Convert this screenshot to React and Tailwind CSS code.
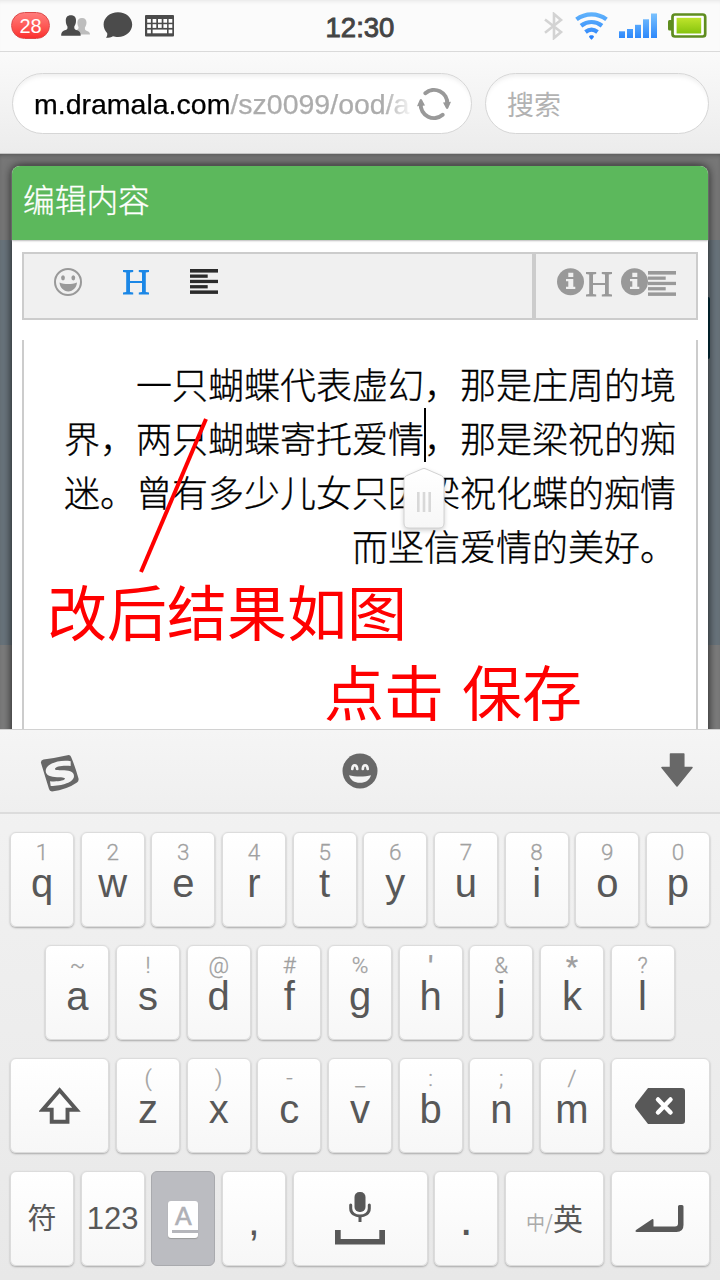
import React from "react";

const CJK = "font-['Noto_Sans_CJK_SC',sans-serif]";

function Badge() {
  return (
    <div className="flex h-[27px] w-[39px] items-center justify-center rounded-full border border-[#dc4a4a] bg-linear-to-b from-[#ff7b7b] to-[#fb2c2c] text-[20px] leading-none text-white">
      28
    </div>
  );
}

function UsersIcon() {
  return (
    <svg className="ml-[11px]" width="30" height="22" viewBox="0 0 30 22">
      <path fill="#bdbdbd" d="M21 3c3 0 4.500 2 4.500 4.500 0 2.500-1 4-1.600 5 0 2 0 2.600 2 3.500 2 .8 3.100 1.500 3.100 3.500H19c0-2-2-3.300-4-4.200 1.700-.7 2.600-1.300 2.600-3C17 11 16.400 9.500 16.400 7.500 16.400 5 18 3 21 3z" />
      <path fill="#4b4b4b" d="M9.800.3c3.600 0 5.400 2.200 5.200 5.400 0 2.700-.8 4.300-1.700 5.700-.2 2.400.3 3 2.700 3.900 2.400.9 3.700 1.900 3.700 5.500H.2c0-3.600 1.300-4.600 3.700-5.500 2.400-.9 2.900-1.500 2.500-3.900C5.500 10 4.800 8.400 4.800 5.700 4.700 2.500 6.400.3 9.800.3z" />
    </svg>
  );
}

function BubbleIcon() {
  return (
    <svg className="ml-[12px]" width="30" height="27" viewBox="0 0 30 27">
      <path fill="#4b4b4b" d="M15 0.300c8 0 14.200 5.400 14.200 12.300S23 25 15 25c-2 0-3.500-.3-5-.8-1.800 1.200-4 1.500-7 1.500 1-1.300 1.500-2.500 1.200-4.500C2 19 .6 16 .6 12.600.6 5.700 7 .3 15 .3z" />
    </svg>
  );
}

function KeyboardIcon() {
  const cells = [2.2, 7.600, 13, 18.400, 23.600];
  return (
    <svg className="ml-[12px]" width="29" height="22" viewBox="0 0 29 22">
      <rect x="0" y="0" width="29" height="21.500" rx="1" fill="#4b4b4b" />
      {cells.map((x) => (
        <g key={x} fill="#fff">
          <rect x={x} y="4" width="3.700" height="3.700" />
          <rect x={x} y="9.200" width="3.700" height="3.700" />
        </g>
      ))}
      <g fill="#fff">
        <rect x="2.200" y="14.600" width="3.700" height="3.700" />
        <rect x="7.600" y="14.600" width="14.400" height="3.700" />
        <rect x="23.600" y="14.600" width="3.700" height="3.700" />
      </g>
    </svg>
  );
}

function BluetoothIcon() {
  return (
    <svg width="20" height="28" viewBox="0 0 20 28" fill="none" stroke="#d3d3d3" strokeWidth="2.600">
      <path d="M1 7.500 17 20l-7 6V2l7 6L1 20.800" />
    </svg>
  );
}

function WifiIcon() {
  return (
    <svg className="ml-[11px]" width="33" height="28" viewBox="0 0 33 28">
      <defs>
        <linearGradient id="wf" x1="0" y1="0" x2="0" y2="28" gradientUnits="userSpaceOnUse">
          <stop offset="0" stopColor="#62b4fb" />
          <stop offset="1" stopColor="#2a82fb" />
        </linearGradient>
      </defs>
      <g fill="none" stroke="url(#wf)" strokeWidth="4.300">
        <path d="M1.500 7.400C10.500.600 22.500.600 31.500 7.400" />
        <path d="M6 13.700c6.500-4.900 14.500-4.900 21 0" />
        <path d="M10.500 19.900c3.900-2.900 8.100-2.900 12 0" />
      </g>
      <path fill="#2a82fb" d="M14 24.400c.6-1.500 4.400-1.500 5 0 0 1-1.400 2-2.500 3.400-1.100-1.400-2.500-2.400-2.500-3.400z" />
    </svg>
  );
}

function SignalIcon() {
  return (
    <svg className="ml-[11px]" width="39" height="26" viewBox="0 0 39 26">
      <defs>
        <linearGradient id="sg" x1="0" y1="0" x2="0" y2="26" gradientUnits="userSpaceOnUse">
          <stop offset="0" stopColor="#7cc3fd" />
          <stop offset="1" stopColor="#2a86fb" />
        </linearGradient>
      </defs>
      <g fill="url(#sg)">
        <rect x="0" y="18.300" width="6" height="6.700" />
        <rect x="8" y="16" width="6" height="9" />
        <rect x="16" y="11.800" width="6" height="13.200" />
        <rect x="24" y="6.300" width="6" height="18.700" />
        <rect x="32" y="0.500" width="6" height="24.500" />
      </g>
    </svg>
  );
}

function BatteryIcon() {
  return (
    <svg className="ml-[10px]" width="39" height="25" viewBox="0 0 39 25">
      <defs>
        <linearGradient id="bt" x1="0" y1="0" x2="0" y2="1">
          <stop offset="0" stopColor="#bfe42c" />
          <stop offset="1" stopColor="#86c40d" />
        </linearGradient>
      </defs>
      <rect x="0" y="7" width="5" height="10.500" rx="1.500" fill="#5f8d1f" />
      <rect x="4.500" y="1.500" width="32.700" height="22" rx="2.500" fill="#fff" stroke="#5f8d1f" strokeWidth="2.700" />
      <rect x="8.600" y="4.800" width="24.600" height="15.700" fill="url(#bt)" />
    </svg>
  );
}

function StatusBar() {
  return (
    <div className="grid h-[52px] grid-cols-3 items-center border-b border-[#dadada] bg-[#fbfbfb] shadow-[inset_0_4px_4px_-3px_#e4e4e4]">
      <div className="flex items-center pl-[11px]">
        <Badge />
        <UsersIcon />
        <BubbleIcon />
        <KeyboardIcon />
      </div>
      <div className="pt-[4px] text-center text-[27.500px] leading-none text-[#444] [-webkit-text-stroke:0.9px_#444]">12:30</div>
      <div className="flex items-center justify-end pr-[13px]">
        <BluetoothIcon />
        <WifiIcon />
        <SignalIcon />
        <BatteryIcon />
      </div>
    </div>
  );
}

function ReloadIcon() {
  return (
    <svg className="shrink-0" width="36" height="34" viewBox="0 0 36 34">
      <g fill="none" stroke="#999" strokeWidth="4" strokeLinecap="round">
        <path d="M9.300 6.200A13.300 13.300 0 0 1 31.300 17" />
        <path d="M26.700 27.800A13.300 13.300 0 0 1 4.700 17" />
      </g>
      <path fill="#999" d="M27 15.500l8-.800-2.800 6.500c-.5 1-1.700 1-2.200 0zM9 18.500l-8 .800 2.800-6.500c.5-1 1.700-1 2.200 0z" />
    </svg>
  );
}

function AddressBar() {
  return (
    <div className="flex h-[102px] items-start gap-[13px] border-b border-[#c4c4c4] bg-linear-to-b from-[#fafafa] to-[#ececec] pl-[12px] pt-[21px]">
      <div className="flex h-[61px] w-[460px] items-center rounded-full border-[1.500px] border-[#d6d6d6] bg-white pl-[21px] shadow-[inset_0_5px_5px_-3px_#ececec]">
        <div className="w-[377px] overflow-hidden whitespace-nowrap pt-px text-[28.500px] leading-[40px] text-[#acacac] [-webkit-text-stroke:0.25px_currentColor] [mask-image:linear-gradient(90deg,#000_350px,transparent_380px)]">
          <span className="text-black">m.dramala.com</span>/sz0099/ood/a
        </div>
        <div className="ml-[5px]">
          <ReloadIcon />
        </div>
      </div>
      <div className="flex h-[61px] w-[224px] items-center rounded-full border-[1.500px] border-[#d6d6d6] bg-white pl-[21px] shadow-[inset_0_5px_5px_-3px_#ececec]">
        <span className={`${CJK} text-[27px] leading-none text-[#b2b2b2]`}>搜索</span>
      </div>
    </div>
  );
}

function SmileIcon() {
  return (
    <svg width="28" height="28" viewBox="0 0 28 28">
      <circle cx="14" cy="14" r="13" fill="none" stroke="#999" strokeWidth="2" />
      <ellipse cx="9" cy="9.800" rx="1.900" ry="2.600" fill="#999" />
      <ellipse cx="19.300" cy="9.800" rx="1.900" ry="2.600" fill="#999" />
      <path fill="#999" d="M5.500 14.600c5 2 12 2 17.500 0-.3 5-4 8.800-8.700 8.800s-8.500-3.800-8.800-8.800z" />
    </svg>
  );
}

function HeadingIcon() {
  return (
    <svg width="26" height="25" viewBox="0 0 26 25" fill="currentColor">
      <path d="M0 0H10.200V2L7 2.500V11H19V2.500L15.800 2V0H26V2L22.800 2.500V22L26 22.500V24.500H15.800V22.500L19 22V13H7V22L10.200 22.500V24.500H0V22.500L3.200 22V2.500L0 2Z" />
    </svg>
  );
}

function AlignLeftIcon() {
  return (
    <svg width="28" height="25" viewBox="0 0 28 25" fill="currentColor">
      <rect width="28" height="3.600" />
      <rect y="5.500" width="17.700" height="3.300" />
      <rect y="10.800" width="28" height="3.300" />
      <rect y="16.100" width="17.700" height="3.300" />
      <rect y="21.400" width="28" height="3.500" />
    </svg>
  );
}

function InfoIcon() {
  return (
    <svg width="27" height="28" viewBox="0 0 27 28">
      <circle cx="13.500" cy="13.800" r="13.500" fill="#999" />
      <path fill="#f0f0f0" d="M11.300 4.700h5v4.300h-5zM9 11h7.300v7.800h2V21H9v-2.200h2.300v-5.500H9z" />
    </svg>
  );
}

function EditorToolbar() {
  return (
    <div className="mx-[10px] mt-[12px] flex h-[68px] border-2 border-[#ccc] bg-[#f0f0f0]">
      <div className="flex w-[508px] items-start pl-[30px] pt-[14px]">
        <SmileIcon />
        <div className="ml-[41px] mt-[2px] text-[#1b87e6]">
          <HeadingIcon />
        </div>
        <div className="ml-[41px] mt-px text-[#2b2b2b]">
          <AlignLeftIcon />
        </div>
      </div>
      <div className="flex flex-1 items-start border-l-4 border-[#ccc] pl-[20.500px] pt-[14px] text-[#999]">
        <InfoIcon />
        <div className="ml-[2px] mt-[4px]">
          <HeadingIcon />
        </div>
        <div className="ml-[9px]">
          <InfoIcon />
        </div>
        <div className="mt-[3px]">
          <AlignLeftIcon />
        </div>
      </div>
    </div>
  );
}

function CursorHandle() {
  return (
    <svg className="absolute left-[400px] top-[310px] overflow-visible" width="48" height="68" viewBox="400 464 48 68">
      <defs>
        <linearGradient id="ch" x1="0" y1="0" x2="0" y2="1">
          <stop offset="0" stopColor="#fff" />
          <stop offset="1" stopColor="#f7f7f7" />
        </linearGradient>
      </defs>
      <path
        className="drop-shadow-[0_2px_2px_rgba(0,0,0,0.180)]"
        fill="url(#ch)"
        stroke="#d2d2d2"
        d="M424 468.500q1 0 2 .500l15.500 6.700q2.500 1.300 2.500 4V523q0 5-5 5h-30q-5 0-5-5v-43.300q0-2.700 2.500-4L422 469q1-.500 2-.500z"
      />
      <path stroke="#d8d8d8" strokeWidth="2.600" d="M418.300 492v20M424 492v20M429.700 492v20" />
    </svg>
  );
}

function Page() {
  return (
    <div className="relative h-[575px] overflow-hidden bg-[linear-gradient(#777_0_86px,#69747c_86px_491px,#7c7c7c_491px)] px-[12px] pt-[12px] shadow-[inset_0_3px_4px_-2px_#555]">
      <div className="absolute left-[706px] top-[143px] h-[62px] w-[4px] rounded bg-[#03303f]" />
      <div className="relative h-[600px] rounded-t-[8px] bg-white shadow-[0_0_10px_0_rgba(0,0,0,0.800)]">
        <div className="h-[74px] rounded-t-[8px] bg-[#5cb85c] pl-[11px] pt-[9px] shadow-[0_1px_2px_#bbb]">
          <span className={`${CJK} block text-[31.700px] font-light leading-[46px] text-white [-webkit-text-stroke:0.3px_currentColor]`}>编辑内容</span>
        </div>
        <EditorToolbar />
        <div className={`mx-[10px] mt-[20px] h-[420px] border-x-2 border-[#ccc] pr-[20px] pt-[16px] text-right ${CJK} text-[36px] font-light leading-[54px] text-black [-webkit-text-stroke:0.3px_currentColor]`}>
          <p>一只蝴蝶代表虚幻，那是庄周的境</p>
          <p>界，两只蝴蝶寄托爱情，那是梁祝的痴</p>
          <p>迷。曾有多少儿女只因梁祝化蝶的痴情</p>
          <p>而坚信爱情的美好。</p>
        </div>
      </div>
      <div className="absolute left-[424px] top-[254px] h-[54px] w-[2px] bg-black" />
      <CursorHandle />
      <svg className="absolute left-[130px] top-[260px]" width="90" height="165" viewBox="130 414 90 165">
        <path d="M206 419 141 572" stroke="#f00" strokeWidth="4" />
      </svg>
      <div className={`absolute left-[47px] top-[423px] ${CJK} text-[60px] leading-[66px] text-[#f00]`}>改后结果如图</div>
      <div className={`absolute left-[324px] top-[503px] ${CJK} text-[60px] leading-[66px] text-[#f00] [word-spacing:4.500px]`}>点击 保存</div>
    </div>
  );
}

const KEY_BASE =
  "flex h-[95px] flex-col items-center rounded-[6px] border border-[#dcdcdc] bg-linear-to-b from-white to-[#f7f7f7] shadow-[0_1px_2px_#a8a8a8]";

function LetterKey({ hint, letter, bold }) {
  return (
    <div className={`${KEY_BASE} w-[64px] shrink-0 pt-[7px]`}>
      <span className={`${bold ? "text-[27px] font-bold leading-[28px]" : "text-[22.500px] font-light leading-[24px] [-webkit-text-stroke:0.3px_currentColor]"} h-[23px] font-['Roboto',sans-serif] text-[#a0a0a0]`}>{hint}</span>
      <span className="text-[40px] leading-[40px] text-[#585858]">{letter}</span>
    </div>
  );
}

function WideKey({ className, children }) {
  return <div className={`${KEY_BASE} justify-center ${className}`}>{children}</div>;
}

function SogouIcon() {
  return (
    <svg width="40" height="40" viewBox="0 0 40 40">
      <path fill="#686868" d="M3.500 8.500Q15 7 27.500 4.200q2.700-.700 3.500 1.500Q35 15 38.500 27.500q.500 2.500-1.500 4-10 7-25 9Q9.500 40 9 38L1 12q-.500-3 2.500-3.500z" transform="translate(0 -1)" />
      <path fill="#f4f4f4" d="M30.700 9.200C20 7.200 5.700 11.500 5.700 19c0 4.500 5.300 6 11.300 6.200 4 .100 8 .300 8 1.300 0 2-8 3.500-15 2.700l.700 4.800C22 33.800 34 30.500 34 24c0-5-6-5.700-12-5.800-4-.100-7 .100-7-1.200 0-2.500 8-3.800 15.700-3z" />
    </svg>
  );
}

function GrinIcon() {
  return (
    <svg width="36" height="36" viewBox="0 0 36 36">
      <circle cx="18" cy="18" r="17.500" fill="#686868" />
      <g fill="none" stroke="#f4f4f4" strokeWidth="2.700" strokeLinecap="round">
        <path d="M10.300 16c.3-5 4.500-5 4.900 0M20.800 16c.3-5 4.500-5 4.900 0" />
      </g>
      <path fill="#f4f4f4" d="M7 22.300c6 1.600 16 1.600 22 0-1.500 5-5.500 7.500-11 7.500S8.500 27.300 7 22.300z" />
    </svg>
  );
}

function KeyboardHeader() {
  return (
    <div className="flex h-[84px] items-start justify-between border-b-2 border-[#dcdcdc] bg-linear-to-b from-[#f5f5f5] to-[#efefef] pl-[40px] pr-[27px] pt-[22px]">
      <div className="w-[40px]">
        <SogouIcon />
      </div>
      <div className="ml-[-21px] mt-px">
        <GrinIcon />
      </div>
      <svg className="mt-px" width="32" height="34" viewBox="0 0 32 34">
        <path fill="#686868" stroke="#686868" strokeWidth="1.500" strokeLinejoin="round" d="M9.500 1h13.300v13.500H31L16 33 1 14.500h8.500z" />
      </svg>
    </div>
  );
}

const ROW1 = [["1", "q"], ["2", "w"], ["3", "e"], ["4", "r"], ["5", "t"], ["6", "y"], ["7", "u"], ["8", "i"], ["9", "o"], ["0", "p"]];
const ROW2 = [["~", "a"], ["!", "s"], ["@", "d"], ["#", "f"], ["%", "g"], ["'", "h"], ["&", "j"], ["*", "k"], ["?", "l"]];
const ROW3 = [["(", "z"], [")", "x"], ["-", "c"], ["_", "v"], [":", "b"], [";", "n"], ["/", "m"]];

function Keys({ items }) {
  return items.map(([hint, letter]) => <LetterKey key={letter} hint={hint} letter={letter} bold={hint === "'" || hint === "*"} />);
}

function Keyboard() {
  return (
    <div className="h-[551px] border-t border-[#d2d2d2] bg-linear-to-b from-[#f3f3f3] to-[#e8e8e8]">
      <KeyboardHeader />
      <div className="flex flex-col gap-[18px] px-[10px] pt-[18px]">
        <div className="flex justify-between">
          <Keys items={ROW1} />
        </div>
        <div className="flex justify-center gap-[6.650px]">
          <Keys items={ROW2} />
        </div>
        <div className="flex gap-[6.650px]">
          <WideKey className="flex-1">
            <svg width="42" height="38" viewBox="0 0 42 38">
              <path fill="none" stroke="#585858" strokeWidth="3.900" strokeLinejoin="miter" d="M20.600 3.200 3.800 22.700h8.900v12h15.800v-12h9z" />
            </svg>
          </WideKey>
          <Keys items={ROW3} />
          <WideKey className="flex-1">
            <svg width="50" height="36" viewBox="0 0 50 36">
              <path fill="#585858" d="M13 0h34q3 0 3 3v30q0 3-3 3H13L.600 20q-1.200-2 0-4z" />
              <path stroke="#fff" strokeWidth="4.500" strokeLinecap="round" d="M23 11.500 35.500 24.500M35.500 11.500 23 24.500" />
            </svg>
          </WideKey>
        </div>
        <div className="flex gap-[6.650px]">
          <WideKey className="w-[64px] shrink-0">
            <span className={`${CJK} -mt-[4px] text-[29px] leading-none text-[#585858]`}>符</span>
          </WideKey>
          <WideKey className="w-[64px] shrink-0">
            <span className="-mt-px text-[31px] leading-none text-[#585858]">123</span>
          </WideKey>
          <div className="flex h-[95px] w-[64px] shrink-0 items-center justify-center rounded-[6px] border border-[#a9aaae] bg-[#bbbcc1]">
            <div className="mt-[2px] flex h-[37px] w-[30px] flex-col items-center rounded-[3px] bg-white shadow-[0_1px_1px_#999]">
              <span className="mt-[2px] h-[27px] text-[25px] leading-[27px] text-[#afb0b6] [-webkit-text-stroke:0.6px_currentColor]">A</span>
              <span className="h-[3px] w-[26px] self-end bg-[#b5b6bb]" />
            </div>
          </div>
          <WideKey className="w-[64px] shrink-0">
            <span className="pt-[4px] text-[42px] leading-[40px] text-[#585858]">,</span>
          </WideKey>
          <WideKey className="w-[135px] shrink-0">
            <svg width="50" height="53" viewBox="0 0 50 53">
              <rect x="19.500" y="0" width="11" height="20" rx="5" fill="#585858" />
              <path fill="none" stroke="#585858" strokeWidth="3" strokeLinecap="round" d="M15.700 13v3.500c0 10 18.600 10 18.600 0V13" />
              <path fill="#585858" d="M23.500 24h3v6h-3zM0 38h5.700v9h38.600v-9H50v14.500H0z" />
            </svg>
          </WideKey>
          <WideKey className="w-[64px] shrink-0">
            <span className="text-[48px] leading-[40px] text-[#585858]">.</span>
          </WideKey>
          <WideKey className="flex-1">
            <span className={`${CJK} -mt-[4px] whitespace-nowrap text-[19px] leading-none text-[#aaa]`}>
              中<span className="text-[20px]">/</span>
              <span className="text-[30px] text-[#585858]">英</span>
            </span>
          </WideKey>
          <WideKey className="flex-1">
            <svg width="50" height="28" viewBox="0 0 50 28">
              <path fill="#585858" d="M43 1.500Q43 0 44.500 0h2.500Q48.500 0 48.500 1.500V20q0 7-7 7H2Q-.500 27 1 25L17 14.200q1.500-.700 1.500 1V21.500H40q3 0 3-3z" />
            </svg>
          </WideKey>
        </div>
      </div>
    </div>
  );
}

export default function App() {
  return (
    <div className="h-[1280px] w-[720px] overflow-hidden bg-[#eee] font-['Liberation_Sans',Arial,sans-serif]">
      <StatusBar />
      <AddressBar />
      <Page />
      <Keyboard />
    </div>
  );
}
